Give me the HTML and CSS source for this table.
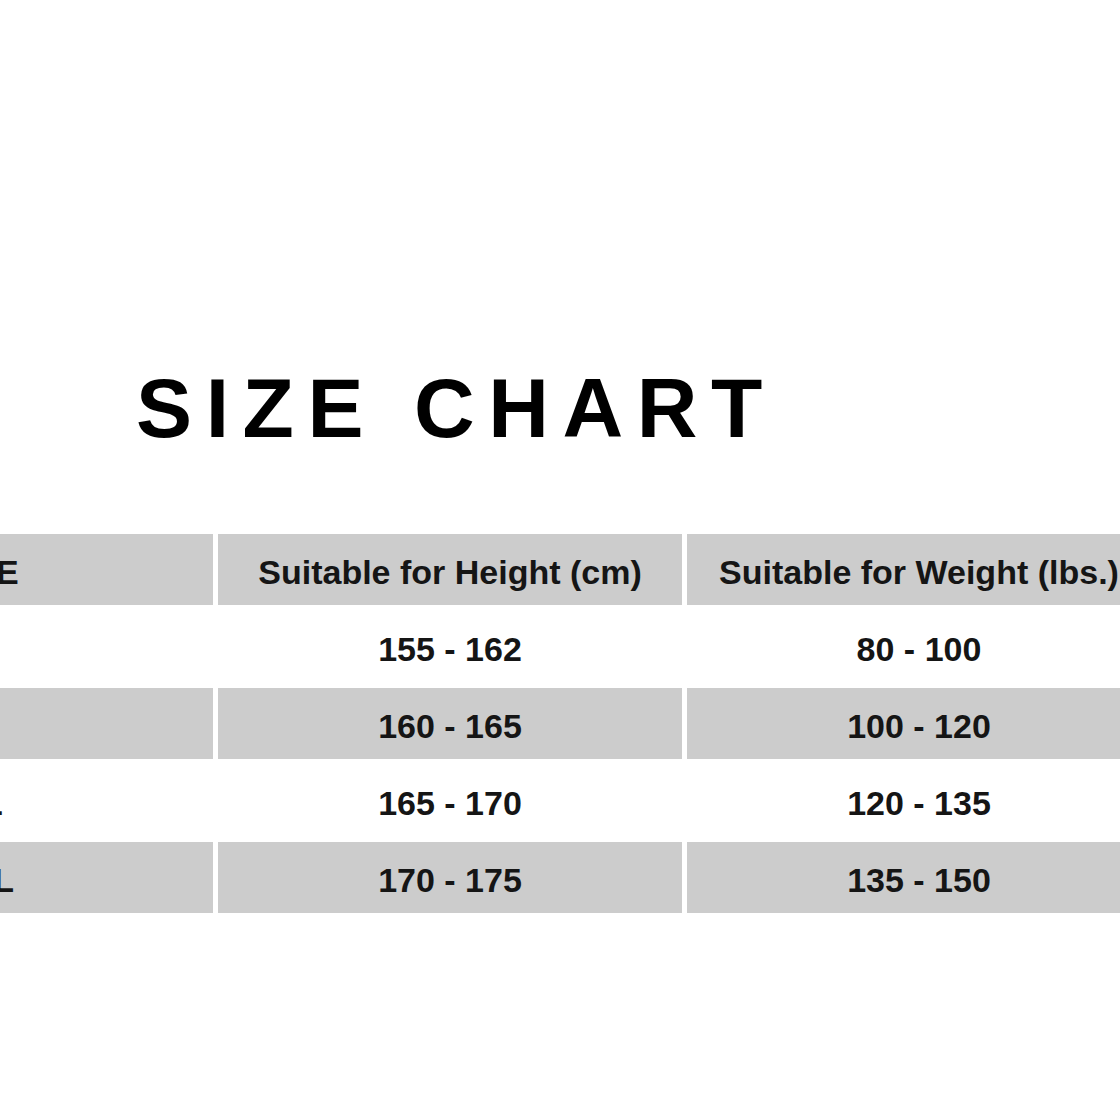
FILE: index.html
```html
<!DOCTYPE html>
<html lang="en">
<head>
<meta charset="utf-8">
<title>Size Chart</title>
<link rel="stylesheet" href="styles.css">
</head>
<body>
<main class="page">
  <h1 class="title">SIZE CHART</h1>
  <table class="chart">
    <thead>
      <tr>
        <th>SIZE</th>
        <th>Suitable for Height (cm)</th>
        <th>Suitable for Weight (lbs.)</th>
      </tr>
    </thead>
    <tbody>
      <tr class="row-plain">
        <td>M</td>
        <td>155 - 162</td>
        <td>80 - 100</td>
      </tr>
      <tr class="row-shaded">
        <td>L</td>
        <td>160 - 165</td>
        <td>100 - 120</td>
      </tr>
      <tr class="row-plain">
        <td>XL</td>
        <td>165 - 170</td>
        <td>120 - 135</td>
      </tr>
      <tr class="row-shaded">
        <td>XXL</td>
        <td>170 - 175</td>
        <td>135 - 150</td>
      </tr>
    </tbody>
  </table>
</main>
</body>
</html>
```

FILE: styles.css
```css
html, body {
  margin: 0;
  padding: 0;
  background: #ffffff;
}

.page {
  width: 1120px;
  height: 1120px;
  overflow: hidden;
  background: #ffffff;
}

.title {
  margin: 0;
  padding: 366px 0 0 136px;
  font-family: "Liberation Sans", Arial, sans-serif;
  font-weight: 700;
  font-size: 84px;
  line-height: 84px;
  letter-spacing: 13.6px;
  color: #000000;
  white-space: nowrap;
}

.chart {
  margin-top: 78px;
  margin-left: -256px;
  width: 1412px;
  table-layout: fixed;
  border-collapse: separate;
  border-spacing: 5px 6px;
  font-family: "Liberation Sans", Arial, sans-serif;
  font-weight: 700;
  font-size: 34px;
  color: #151515;
}

.chart th,
.chart td {
  height: 66px;
  padding: 5px 0 0;
  text-align: center;
  vertical-align: middle;
  white-space: nowrap;
  font-weight: 700;
}

.chart th {
  background: #cccccc;
}

.row-shaded td {
  background: #cccccc;
}

.row-plain td {
  background: #ffffff;
}
```
